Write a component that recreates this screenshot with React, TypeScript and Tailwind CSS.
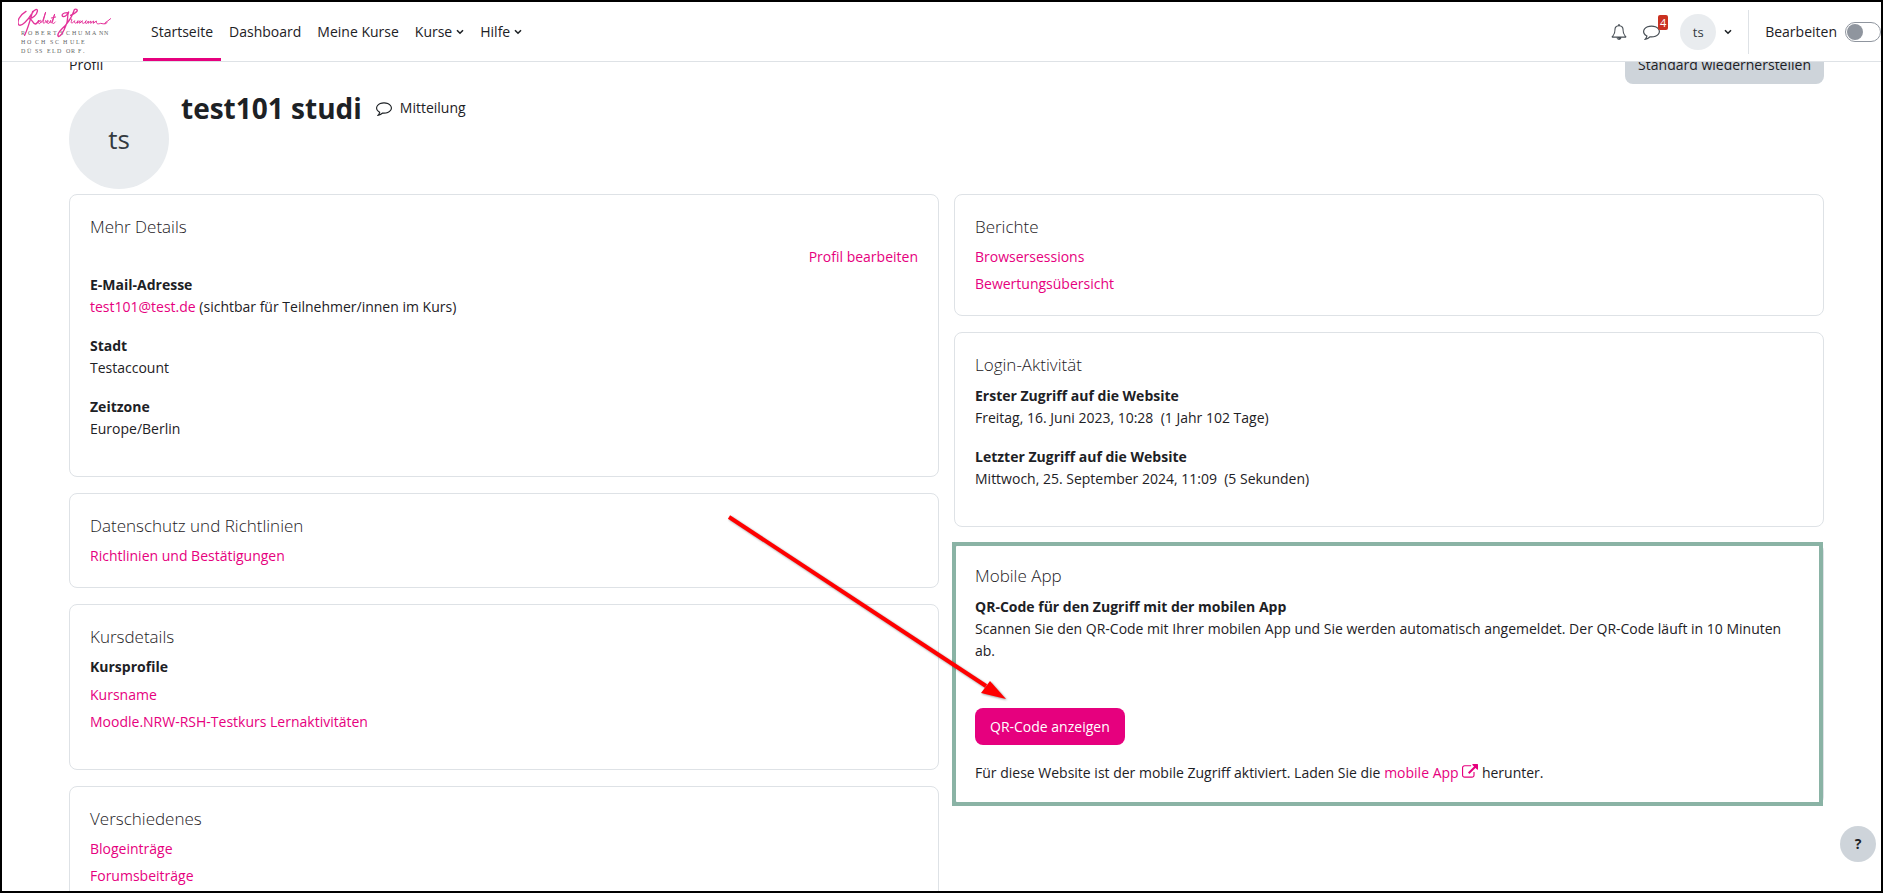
import React from "react";

const COMMENT =
  "M896 384q-204 0-381.5 69.5t-282 187.5-104.5 255q0 112 71.5 213.5t201.5 175.5l87 50-27 96q-24 91-70 172 152-63 275-171l43-38 57 6q69 8 130 8 204 0 381.5-69.5t282-187.5 104.5-255-104.5-255-282-187.5-381.5-69.5zM1792 896q0 174-120 321.5t-326 233-450 85.5q-70 0-145-8-198 175-460 242-49 14-114 22h-5q-15 0-27-10.5t-16-27.5v-1q-3-4-.5-12t2-10 4.5-9.5l6-9 7-8.5 8-9q7-8 31-34.5t34.5-38 31-39.5 32.5-51 27-59 26-76q-157-89-247.5-220t-90.5-281q0-174 120-321.5t326-233 450-85.5 450 85.5 326 233 120 321.5z";
const BELL =
  "M912 1696q0-16-16-16-59 0-101.5-42.5t-42.5-101.5q0-16-16-16t-16 16q0 73 51.5 124.5t124.5 51.5q16 0 16-16zm-666-288h1300q-266-300-266-832 0-51-24-105t-69-103-121.5-80.5-169.5-31.5-169.5 31.5-121.5 80.5-69 103-24 105q0 532-266 832zm1482 0q0 52-38 90t-90 38h-448q0 106-75 181t-181 75-181-75-75-181h-448q-52 0-90-38t-38-90q50-42 91-88t85-119.5 74.5-158.5 50-206 19.5-260q0-152 117-282.5t307-158.5q-8-19-8-39 0-40 28-68t68-28 68 28 28 68q0 20-8 39 190 28 307 158.5t117 282.5q0 139 19.5 260t50 206 74.5 158.5 85 119.5 91 88z";
const EXTERNAL =
  "M1408 928v320q0 119-84.5 203.5t-203.5 84.5h-832q-119 0-203.5-84.5t-84.5-203.5v-832q0-119 84.5-203.5t203.5-84.5h704q14 0 23 9t9 23v64q0 14-9 23t-23 9h-704q-66 0-113 47t-47 113v832q0 66 47 113t113 47h832q66 0 113-47t47-113v-320q0-14 9-23t23-9h64q14 0 23 9t9 23zm384-864v512q0 26-19 45t-45 19-45-19l-176-176-652 652q-10 10-23 10t-23-10l-114-114q-10-10-10-23t10-23l652-652-176-176q-19-19-19-45t19-45 45-19h512q26 0 45 19t19 45z";

function Icon({ d, className }: { d: string; className: string }) {
  return (
    <svg viewBox="0 0 1792 1792" fill="currentColor" aria-hidden="true" className={className}>
      <path d={d} />
    </svg>
  );
}

function Chevron() {
  return (
    <svg viewBox="0 0 8 6" aria-hidden="true" className="h-1.5 w-2 shrink-0">
      <path d="M1 1.2 4 4.2 7 1.2" fill="none" stroke="currentColor" strokeWidth="1.6" />
    </svg>
  );
}

function Logo() {
  return (
    <svg viewBox="0 0 96 48" role="img" aria-label="Robert Schumann Hochschule Düsseldorf" className="h-12 w-24">
      <g fill="#666" fontFamily="Liberation Serif, serif" fontSize="6">
        <text x="3 10 17 23 29 35 42 48 54 60 67 74 81 86" y="29">ROBERTSCHUMANN</text>
        <text x="3 9 17 23 32 37 45 52 58 63" y="38">HOCHSCHULE</text>
        <text x="3 9 17 21 29 34 39 48 53 60 65" y="47">DÜSSELDORF.</text>
      </g>
      <g
        transform="translate(-18 -6) scale(0.3333)"
        fill="none"
        stroke="#e3339a"
        strokeLinecap="round"
        strokeLinejoin="round"
      >
        <path
          strokeWidth="4"
          d="M78 34C58 46 50 64 56 74C64 82 84 60 96 40C102 28 114 24 112 34C110 46 98 54 88 56C98 58 98 72 106 72C110 72 114 66 116 62M98 34C92 56 84 84 74 106"
        />
        <path
          strokeWidth="3"
          d="M116 62C112 72 120 74 123 66C125 60 119 59 118 64C122 70 127 66 129 60L137 36L129 66C130 74 138 68 136 62C138 60 141 65 140 68C145 66 146 61 143 61C140 64 141 74 148 69L152 61C152 66 151 71 155 68L164 42L157 68C158 73 163 70 166 66M154 54L167 51"
        />
        <path
          strokeWidth="4"
          d="M202 38C188 38 182 46 190 50C198 50 204 40 206 36C200 50 206 58 198 76C192 92 186 108 176 110C170 106 176 96 186 86C200 74 214 54 222 32C222 26 232 26 232 32C228 40 216 44 212 46"
        />
        <path
          strokeWidth="3"
          d="M206 60C214 54 218 56 214 64C212 72 218 70 224 62C222 72 228 72 234 62L232 70L240 62L239 70L247 62C245 72 250 72 256 66C262 60 258 60 256 66C256 74 262 70 265 63L264 70L273 63L272 70L281 63L280 70L289 63C288 74 296 72 302 70C316 74 324 70 320 66M314 70L332 56"
        />
      </g>
    </svg>
  );
}

function NavItem({ label, active, menu }: { label: string; active?: boolean; menu?: boolean }) {
  return (
    <a
      href="#"
      aria-current={active ? "page" : undefined}
      className={
        active
          ? "flex items-center gap-1 border-b-3 border-[#e6007e] px-2 pt-1"
          : "flex items-center gap-1 border-b-3 border-transparent px-2 pt-1"
      }
    >
      {label}
      {menu && <Chevron />}
    </a>
  );
}

function Card({ title, children }: { title: string; children: React.ReactNode }) {
  return (
    <section className="relative rounded-lg border border-[#dee2e6] p-5">
      <h3 className="mb-2 text-[17px] leading-[23px] font-light">{title}</h3>
      {children}
    </section>
  );
}

function Entry({ term, children }: { term: string; children: React.ReactNode }) {
  return (
    <div className="mb-4">
      <dt className="leading-[23px] font-bold">{term}</dt>
      <dd className="leading-[22px]">{children}</dd>
    </div>
  );
}

function Link({ children }: { children: React.ReactNode }) {
  return (
    <a href="#" className="text-[#e6007e]">
      {children}
    </a>
  );
}

function LinkList({ items }: { items: string[] }) {
  return (
    <ul className="flex flex-col gap-[5px]">
      {items.map((item) => (
        <li key={item}>
          <Link>{item}</Link>
        </li>
      ))}
    </ul>
  );
}

export default function App() {
  return (
    <div className="relative flex h-screen flex-col overflow-hidden border-2 border-black bg-white font-['Open_Sans','Noto_Sans',sans-serif] text-[14px] leading-[22px] text-[#1d2125]">
      <header className="relative z-10 flex h-[60px] shrink-0 border-b border-[#dee2e6] bg-white">
        <a href="#" className="mt-1 mr-[29px] ml-4">
          <Logo />
        </a>
        <nav className="flex">
          <NavItem label="Startseite" active />
          <NavItem label="Dashboard" />
          <NavItem label="Meine Kurse" />
          <NavItem label="Kurse" menu />
          <NavItem label="Hilfe" menu />
        </nav>
        <div className="ml-auto flex items-center">
          <button aria-label="Mitteilungen anzeigen" className="mr-4 text-[#495057]">
            <Icon d={BELL} className="size-4" />
          </button>
          <button aria-label="Messenger" className="relative mr-5 text-[#495057]">
            <Icon d={COMMENT} className="size-[17px]" />
            <span className="absolute -top-2 -right-2 h-[15px] w-2.5 rounded-xs bg-[#ca3120] text-center text-[11px] leading-[15px] text-white">
              4
            </span>
          </button>
          <button aria-label="Nutzermenü" className="mr-4 flex items-center gap-2">
            <span className="size-9 rounded-full bg-[#e9ecef] text-[13px] leading-9 text-[#343a40]">ts</span>
            <Chevron />
          </button>
          <label className="flex h-11 items-center gap-2 border-l border-[#dee2e6] pl-4">
            Bearbeiten
            <input
              type="checkbox"
              role="switch"
              className="h-5 w-9 appearance-none rounded-full border border-[#8f959e] bg-white before:m-px before:block before:size-4 before:rounded-full before:bg-[#8f959e]"
            />
          </label>
        </div>
      </header>

      <main className="-mt-4 flex-1 pr-[57px] pl-[67px]">
        <div className="flex h-[38px] items-center justify-between">
          <span>Profil</span>
          <button className="h-[38px] rounded-lg bg-[#ced4da] px-[13px]">Standard wiederherstellen</button>
        </div>

        <div className="mt-[5px] flex gap-3">
          <div className="flex size-[100px] items-center justify-center rounded-full bg-[#e9ecef] text-[26px] text-[#343a40]">
            ts
          </div>
          <div className="flex h-[38px] items-center gap-3.5">
            <h2 className="text-[28px] font-bold">test101 studi</h2>
            <a href="#" className="flex items-center gap-2">
              <Icon d={COMMENT} className="size-4" />
              Mitteilung
            </a>
          </div>
        </div>

        <div className="mt-[5px] grid grid-cols-2 items-start gap-[15px]">
          <div className="flex flex-col gap-4">
            <Card title="Mehr Details">
              <div className="mb-[5px] text-right">
                <Link>Profil bearbeiten</Link>
              </div>
              <dl>
                <Entry term="E-Mail-Adresse">
                  <Link>test101@test.de</Link> (sichtbar für Teilnehmer/innen im Kurs)
                </Entry>
                <Entry term="Stadt">Testaccount</Entry>
                <Entry term="Zeitzone">Europe/Berlin</Entry>
              </dl>
            </Card>
            <Card title="Datenschutz und Richtlinien">
              <LinkList items={["Richtlinien und Bestätigungen"]} />
            </Card>
            <Card title="Kursdetails">
              <div className="mb-4">
                <h4 className="mb-1.5 font-bold">Kursprofile</h4>
                <LinkList items={["Kursname", "Moodle.NRW-RSH-Testkurs Lernaktivitäten"]} />
              </div>
            </Card>
            <Card title="Verschiedenes">
              <LinkList items={["Blogeinträge", "Forumsbeiträge"]} />
            </Card>
          </div>

          <div className="flex flex-col gap-4">
            <Card title="Berichte">
              <LinkList items={["Browsersessions", "Bewertungsübersicht"]} />
            </Card>
            <Card title="Login-Aktivität">
              <dl>
                <Entry term="Erster Zugriff auf die Website">Freitag, 16. Juni 2023, 10:28&nbsp; (1 Jahr 102 Tage)</Entry>
                <Entry term="Letzter Zugriff auf die Website">
                  Mittwoch, 25. September 2024, 11:09&nbsp; (5 Sekunden)
                </Entry>
              </dl>
            </Card>
            <Card title="Mobile App">
              <h4 className="leading-[23px] font-bold">QR-Code für den Zugriff mit der mobilen App</h4>
              <p>
                Scannen Sie den QR-Code mit Ihrer mobilen App und Sie werden automatisch angemeldet. Der QR-Code läuft in
                10 Minuten ab.
              </p>
              <button className="mt-[46px] mb-4 block h-[37px] rounded-lg bg-[#e6007e] px-[15px] text-white">
                QR-Code anzeigen
              </button>
              <p className="leading-[23px]">
                Für diese Website ist der mobile Zugriff aktiviert. Laden Sie die{" "}
                <a href="#" className="text-[#e6007e]">
                  mobile App <Icon d={EXTERNAL} className="inline size-4 align-[-2px]" />
                </a>{" "}
                herunter.
              </p>
              <div className="pointer-events-none absolute -inset-y-0.5 right-0 -left-[3px] border-4 border-[#8ab3a5]" />
              <svg
                viewBox="0 0 290 200"
                aria-hidden="true"
                className="pointer-events-none absolute -top-8 -left-[230px] h-[200px] w-[290px] drop-shadow-[1px_1px_1px_rgba(0,0,0,0.4)]"
              >
                <path d="M4 5 261 174" stroke="#f00" strokeWidth="4" />
                <path d="M281 187 256 181 265 169Z" fill="#f00" />
              </svg>
            </Card>
          </div>
        </div>
      </main>

      <button
        aria-label="Hilfe"
        className="absolute right-[5px] bottom-[29px] size-9 rounded-full bg-[#ced4da] text-[14px] font-bold"
      >
        ?
      </button>
    </div>
  );
}
